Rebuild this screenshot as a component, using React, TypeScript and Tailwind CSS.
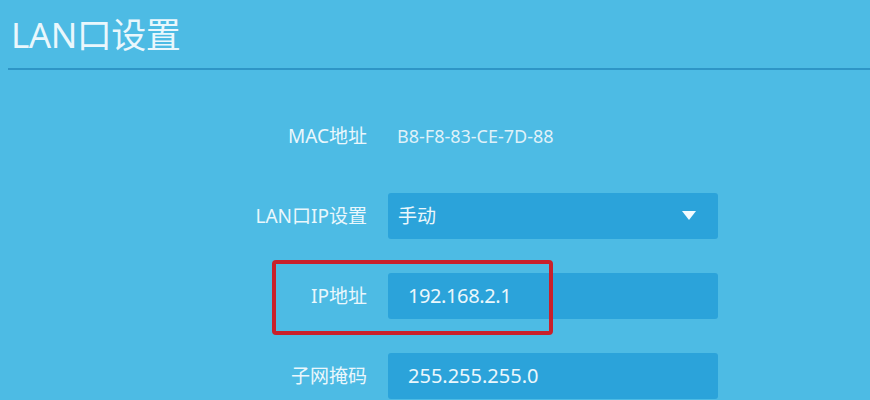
export default function App() {
  const font = { fontFamily: '"Microsoft YaHei", "Noto Sans", "Noto Sans CJK SC", sans-serif' }

  return (
    <div className="w-[870px] h-[400px] overflow-hidden bg-[#4dbbe4] text-[#eaf7fc]" style={font}>
      <div className="pl-[11px] pt-[12px] h-[68px]">
        <h1 className="text-[35px] leading-[46px] font-normal tracking-[-0.5px]">LAN口设置</h1>
      </div>
      <div className="ml-[8px] h-[2px] bg-[#2e95c6]" />

      <div className="pt-[43px] flex flex-col gap-[34px]">
        <div className="flex items-center h-[46px]">
          <div className="w-[367px] text-right text-[19px]">MAC地址</div>
          <div className="ml-[30px] text-[18px] text-[#dff1f9]">B8-F8-83-CE-7D-88</div>
        </div>

        <div className="flex items-center h-[46px]">
          <div className="w-[367px] text-right text-[19px]">LAN口IP设置</div>
          <div className="ml-[21px] w-[330px] h-[46px] rounded-[3px] bg-[#2ba3da] flex items-center justify-between pl-[10px] pr-[22px]">
            <span className="text-[19px]">手动</span>
            <svg width="14" height="10" viewBox="0 0 14 10">
              <path d="M0 0 H14 L7 9 Z" fill="#f2fbff" />
            </svg>
          </div>
        </div>

        <div className="relative flex items-center h-[46px]">
          <div className="w-[367px] text-right text-[19px]">IP地址</div>
          <div className="ml-[21px] w-[330px] h-[46px] rounded-[3px] bg-[#2ba3da] flex items-center pl-[20px]">
            <span className="text-[20px] tracking-[-0.4px]">192.168.2.1</span>
          </div>
          <div className="absolute left-[272px] top-[-13px] w-[281px] h-[75px] border-[4px] border-[#c9202b] rounded-[4px]" />
        </div>

        <div className="flex items-center h-[46px]">
          <div className="w-[367px] text-right text-[19px]">子网掩码</div>
          <div className="ml-[21px] w-[330px] h-[46px] rounded-[3px] bg-[#2ba3da] flex items-center pl-[20px]">
            <span className="text-[20px]">255.255.255.0</span>
          </div>
        </div>
      </div>
    </div>
  )
}
